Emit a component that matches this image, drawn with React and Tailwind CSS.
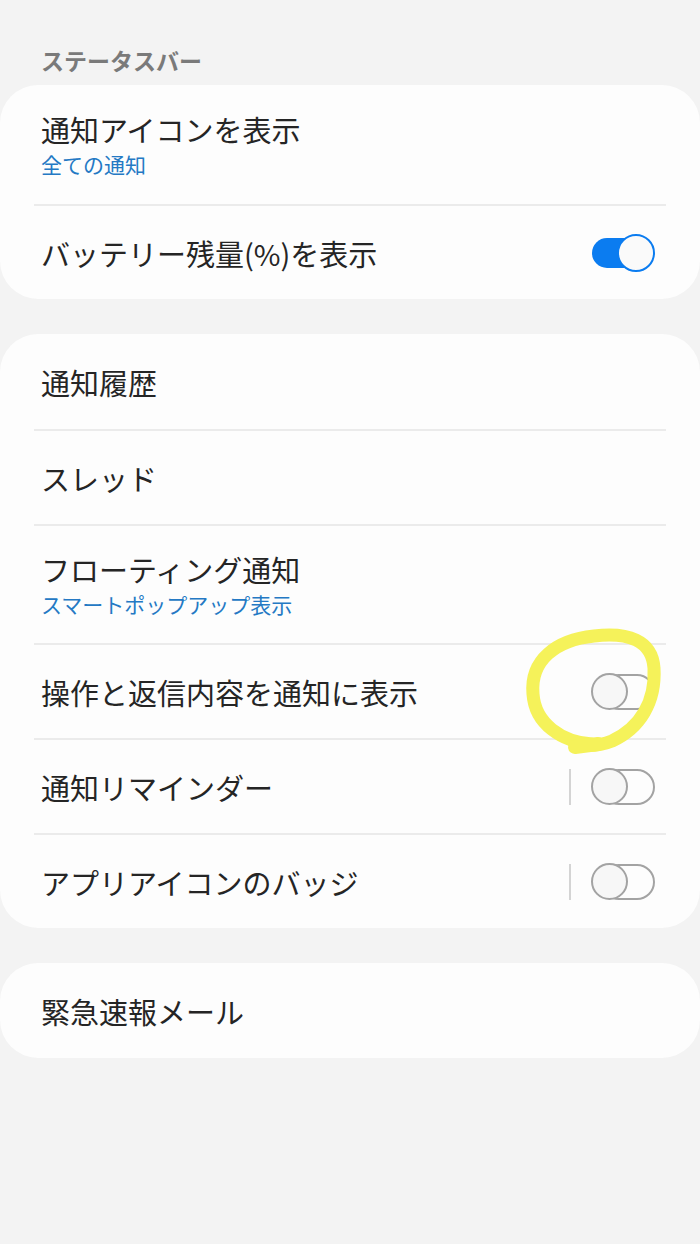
import React from 'react';

const font = { fontFamily: '"Noto Sans CJK JP", "Noto Sans", sans-serif' };

const Toggle = ({ on }) => {
    if (on) {
        return (
            <div className="relative w-[63px] h-[38px] shrink-0">
                <div className="absolute left-0 right-[2px] top-[4px] bottom-[4px] rounded-full bg-[#0b7cf0]" />
                <div className="absolute right-0 top-0 w-[38px] h-[38px] rounded-full bg-[#fafafa] border-[2.5px] border-[#0b7cf0]" />
            </div>
        );
    }
    return (
        <div className="relative w-[64px] h-[37px] shrink-0">
            <div className="absolute left-[10px] right-0 top-[1px] bottom-0 rounded-full border-[2px] border-[#a3a3a3]" />
            <div className="absolute left-0 top-0 w-[37px] h-[37px] rounded-full bg-[#f7f7f7] border-[2px] border-[#a3a3a3]" />
        </div>
    );
};

const Row = ({ title, sub, toggle, split, first }) => (
    <div className={`flex items-center ${first ? '' : 'border-t-[2px] border-[#ebebeb]'} ${sub ? 'h-[119px]' : 'h-[95px]'}`}>
        <div className="flex-1 pl-[7px]">
            <div className="text-[29px] leading-[34px] text-[#252525]">{title}</div>
            {sub && <div className="text-[21px] leading-[26px] text-[#2479c4] mt-[5px]">{sub}</div>}
        </div>
        {split && <div className="w-[2px] h-[36px] bg-[#d4d4d4] mr-[20px]" />}
        {toggle !== undefined && (
            <div className="pr-[11px]">
                <Toggle on={toggle} />
            </div>
        )}
    </div>
);

const Card = ({ children, className = '' }) => (
    <div className={`bg-[#fdfdfd] rounded-[38px] px-[34px] ${className}`}>{children}</div>
);

const App = () => {
    return (
        <div className="relative min-h-[1244px] bg-[#f3f3f3] overflow-hidden" style={font}>
            {/* Section header */}
            <div className="pt-[45px] pl-[41px] pb-[10px] text-[23px] leading-[30px] font-bold text-[#7a7a7a]">
                ステータスバー
            </div>

            <Card>
                <Row first title="通知アイコンを表示" sub="全ての通知" />
                <Row title="バッテリー残量(%)を表示" toggle={true} />
            </Card>

            <Card className="mt-[35px]">
                <Row first title="通知履歴" />
                <Row title="スレッド" />
                <Row title="フローティング通知" sub="スマートポップアップ表示" />
                <Row title="操作と返信内容を通知に表示" toggle={false} />
                <Row title="通知リマインダー" toggle={false} split />
                <Row title="アプリアイコンのバッジ" toggle={false} split />
            </Card>

            <Card className="mt-[35px]">
                <Row first title="緊急速報メール" />
            </Card>

            {/* Hand-drawn highlight */}
            <svg className="absolute left-0 top-0 pointer-events-none" width="700" height="1244" viewBox="0 0 700 1244">
                <path
                    d="M592 744 C562 742 535 724 533 694 C530 660 556 640 594 636 C628 632 652 640 654 668 C656 702 640 728 612 741 C600 746 588 746 578 745"
                    fill="none"
                    stroke="#f5f25a"
                    strokeWidth="13"
                    strokeLinecap="round"
                    strokeLinejoin="round"
                />
                <path d="M575 747 L598 744" stroke="#f5f25a" strokeWidth="14" strokeLinecap="round" />
            </svg>
        </div>
    );
};

export default App;
